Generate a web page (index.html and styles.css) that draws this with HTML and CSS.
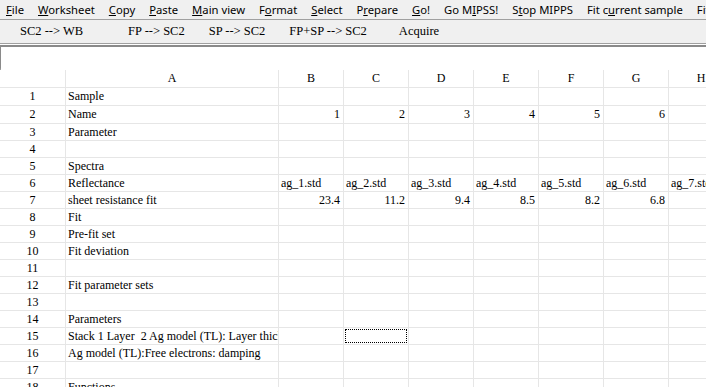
FILE: index.html
```html
<!DOCTYPE html>
<html lang="en">
<head>
  <meta charset="UTF-8" />
  <title>Worksheet</title>
  <link rel="stylesheet" href="styles.css">
</head>
<body>
  <div class="menubar">
    <span><u>F</u>ile</span>
    <span><u>W</u>orksheet</span>
    <span><u>C</u>opy</span>
    <span><u>P</u>aste</span>
    <span><u>M</u>ain view</span>
    <span>F<u>o</u>rmat</span>
    <span><u>S</u>elect</span>
    <span>P<u>r</u>epare</span>
    <span><u>G</u>o!</span>
    <span>Go M<u>I</u>PSS!</span>
    <span>S<u>t</u>op MIPPS</span>
    <span>Fit c<u>u</u>rrent sample</span>
    <span>Fit</span>
  </div>

  <div class="toolbar">
    <button class="first">SC2 --&gt; WB</button>
    <button>FP --&gt; SC2</button>
    <button>SP --&gt; SC2</button>
    <button class="wide">FP+SP --&gt; SC2</button>
    <button>Acquire</button>
  </div>

  <div class="editbar">
    <input type="text" value="">
  </div>

  <div class="sheet" id="sheet"></div>

  <script>
    const sheet = document.getElementById("sheet");
    const cols = ["", "A", "B", "C", "D", "E", "F", "G", "H"];
    const rows = [
      ["Sample"],
      ["Name", 1, 2, 3, 4, 5, 6, 7],
      ["Parameter"],
      [""],
      ["Spectra"],
      ["Reflectance", "ag_1.std", "ag_2.std", "ag_3.std", "ag_4.std", "ag_5.std", "ag_6.std", "ag_7.std"],
      ["sheet resistance fit", 23.4, 11.2, 9.4, 8.5, 8.2, 6.8, 5.9],
      ["Fit"],
      ["Pre-fit set"],
      ["Fit deviation"],
      [""],
      ["Fit parameter sets"],
      [""],
      ["Parameters"],
      ["Stack 1 Layer  2 Ag model (TL): Layer thickness"],
      ["Ag model (TL):Free electrons: damping"],
      [""],
      ["Functions"],
      [""],
      [""]
    ];

    cols.forEach(c => {
      const head = document.createElement("div");
      head.className = "cell head";
      head.textContent = c;
      sheet.appendChild(head);
    });

    rows.forEach((row, r) => {
      const num = document.createElement("div");
      num.className = "cell head";
      num.textContent = r + 1;
      sheet.appendChild(num);

      for (let c = 0; c < 8; c++) {
        const cell = document.createElement("div");
        const val = row[c];
        cell.className = "cell";
        if (typeof val === "number") cell.classList.add("num");
        if (val !== undefined) cell.textContent = val;
        if (r === 14 && c === 2) cell.classList.add("current");
        sheet.appendChild(cell);
      }
    });
  </script>
</body>
</html>
```

FILE: styles.css
```css
html, body {
  margin: 0;
  height: 100%;
  overflow: hidden;
}
body {
  background: #fff;
  color: #000;
  font-family: "Segoe UI", "Noto Sans", sans-serif;
}
.menubar {
  display: flex;
  height: 19px;
  align-items: center;
  background: #f0f0f0;
  border-bottom: 1px solid #a0a0a0;
  font-size: 11.25px;
  white-space: nowrap;
}
.menubar span {
  padding: 0 7px;
  line-height: 19px;
}
.menubar span:first-child {
  padding-left: 6px;
}
.toolbar {
  display: flex;
  height: 23px;
  align-items: center;
  gap: 24px;
  padding-left: 20px;
  background: #f0f0f0;
  border-bottom: 1px solid #a0a0a0;
}
.toolbar button {
  border: none;
  background: none;
  padding: 0;
  font-family: "Liberation Serif", serif;
  font-size: 12.5px;
  color: #000;
}
.toolbar .first {
  margin-right: 21px;
}
.toolbar .wide {
  margin-right: 8px;
}
.editbar {
  margin-top: 1px;
  border-top: 2px solid #8a8a8a;
  border-left: 1px solid #8a8a8a;
  border-bottom: 2px solid #a8a8a8;
  height: 21px;
}
.editbar input {
  width: 100%;
  height: 100%;
  box-sizing: border-box;
  border: none;
  outline: none;
  padding: 0 3px;
}
.sheet {
  display: grid;
  grid-template-columns: 65px 212px repeat(7, 64px);
  grid-template-rows: 17px 17px 17px;
  grid-auto-rows: 16px;
  gap: 1px;
  background: #e6e6e6;
  width: max-content;
  font-family: "Liberation Serif", serif;
  font-size: 12px;
}
.cell {
  background: #fff;
  line-height: 16px;
  padding: 0 0 0 2px;
  white-space: pre;
  overflow: hidden;
}
.cell.head {
  text-align: center;
  padding: 0;
}
.cell.num {
  text-align: right;
  padding-right: 3px;
}
.cell.current {
  outline: 1px dotted #000;
  outline-offset: -2px;
}
```
